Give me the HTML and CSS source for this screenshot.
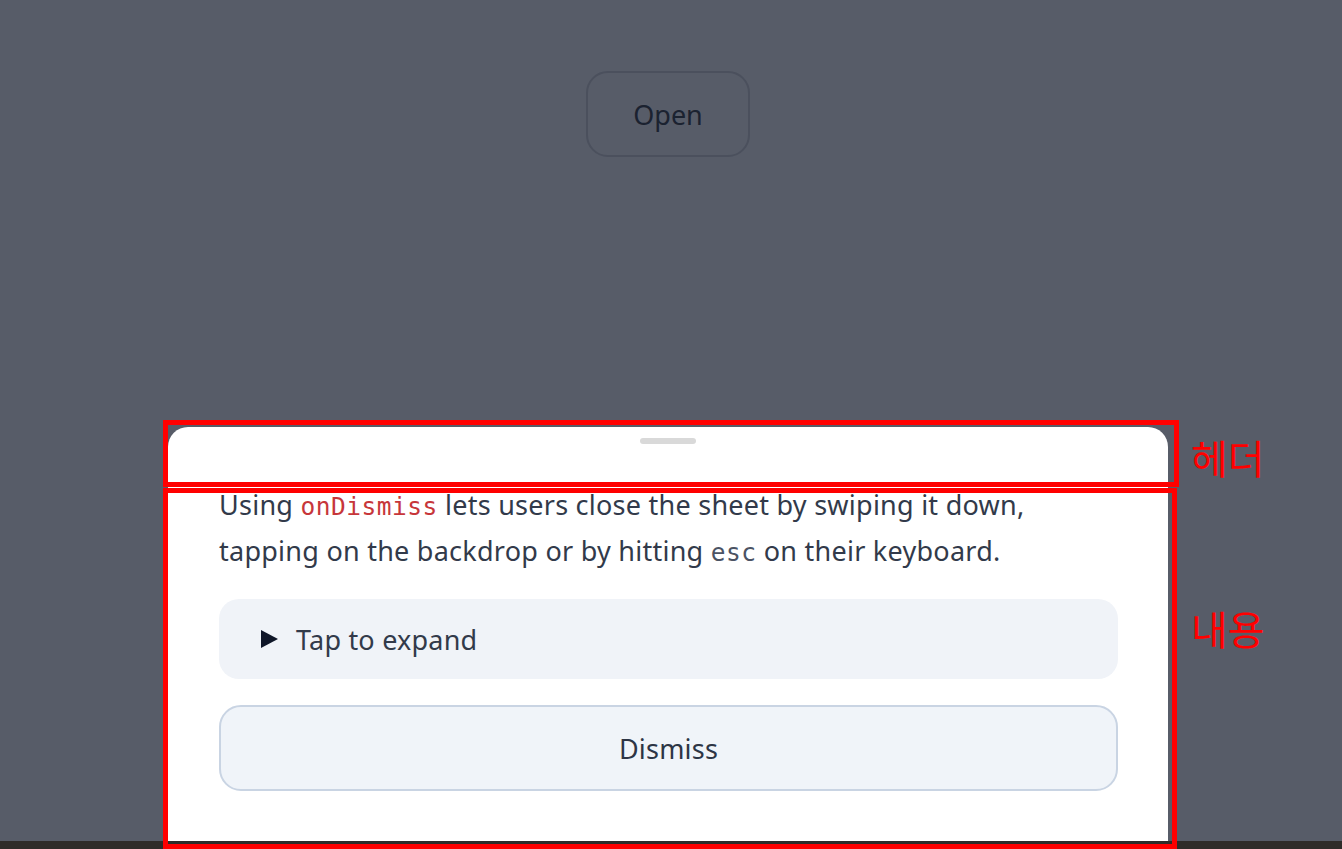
FILE: index.html
```html
<!DOCTYPE html>
<html lang="en">
<head>
    <meta charset="UTF-8">
    <meta name="viewport" content="width=device-width, initial-scale=1.0">
    <title>Bottom Sheet - onDismiss</title>
    <link rel="stylesheet" href="styles.css">
</head>
<body>
    <div class="stage">
        <button class="open-btn">Open</button>
    </div>

    <div class="sheet">
        <div class="sheet-header">
            <div class="handle"></div>
        </div>
        <div class="sheet-content">
            <p class="intro">Using <code class="code-red">onDismiss</code> lets users close the sheet by swiping it down, tapping on the backdrop or by hitting <code class="code-kbd">esc</code> on their keyboard.</p>
            <details class="expander">
                <summary><span class="arrow"></span>Tap to expand</summary>
            </details>
            <button class="dismiss-btn">Dismiss</button>
        </div>
    </div>

    <div class="taskbar"></div>

    <!-- annotations -->
    <div class="mark mark-header"></div>
    <div class="mark mark-content"></div>
    <span class="mark-label label-header">헤더</span>
    <span class="mark-label label-content">내용</span>
</body>
</html>
```

FILE: styles.css
```css
body {
    margin: 0;
    padding: 0;
    background-color: #575c68;
    font-family: "Noto Sans", "Open Sans", sans-serif;
    overflow: hidden;
}
.stage {
    height: 100vh;
    display: flex;
    justify-content: center;
    align-items: flex-start;
    padding-top: 71px;
    padding-right: 6px;
    box-sizing: border-box;
}
.open-btn {
    width: 164px;
    height: 86px;
    background: transparent;
    border: 2px solid #4b505d;
    border-radius: 22px;
    color: #1b2230;
    font-family: inherit;
    font-size: 27px;
    padding: 0;
}
.sheet {
    position: fixed;
    left: 0;
    right: 6px;
    bottom: 8px;
    width: 1000px;
    margin: 0 auto;
    background: #fff;
    border-radius: 20px 20px 0 0;
}
.sheet-header {
    height: 55px;
    display: flex;
    justify-content: center;
}
.handle {
    width: 56px;
    height: 6px;
    margin-top: 11px;
    border-radius: 3px;
    background-color: #d9d9d9;
}
.sheet-content {
    padding: 0 50px 50px 51px;
}
.intro {
    margin: 0;
    max-width: 860px;
    font-size: 27px;
    line-height: 46px;
    color: #323a4a;
    letter-spacing: 0.25px;
}
.intro code {
    font-family: "DejaVu Sans Mono", "Liberation Mono", monospace;
    font-size: 24.5px;
    line-height: 1;
    letter-spacing: 0.5px;
}
.code-red {
    color: #c7363a;
}
.code-kbd {
    color: #4b5364;
}
.expander {
    margin-top: 25px;
    background-color: #f0f3f8;
    border-radius: 20px;
}
.expander summary {
    list-style: none;
    height: 80px;
    display: flex;
    align-items: center;
    padding-left: 42px;
    font-size: 27px;
    color: #323a4a;
    letter-spacing: 0.2px;
    cursor: pointer;
}
.expander summary::-webkit-details-marker {
    display: none;
}
.arrow {
    width: 0;
    height: 0;
    border-top: 9px solid transparent;
    border-bottom: 9px solid transparent;
    border-left: 17px solid #0f1628;
    margin-right: 18px;
}
.dismiss-btn {
    display: block;
    width: 100%;
    height: 86px;
    margin-top: 26px;
    background-color: #f0f4f9;
    border: 2px solid #c9d4e3;
    border-radius: 22px;
    color: #2d3545;
    font-family: inherit;
    font-size: 27px;
    letter-spacing: 0.2px;
}
.taskbar {
    position: fixed;
    left: 0;
    right: 0;
    bottom: 0;
    height: 8px;
    background-color: #2f2c29;
}
.mark {
    position: absolute;
    border: 5px solid #ff0000;
    box-sizing: border-box;
}
.mark-header {
    left: 163px;
    top: 420px;
    width: 1016px;
    height: 67px;
}
.mark-content {
    left: 163px;
    top: 488px;
    width: 1014px;
    height: 361px;
}
.mark-label {
    position: absolute;
    left: 1191px;
    color: #ff0000;
    font-family: "Noto Sans CJK KR", sans-serif;
    font-size: 40px;
    line-height: 1;
}
.label-header {
    top: 437px;
}
.label-content {
    top: 608px;
}
```
